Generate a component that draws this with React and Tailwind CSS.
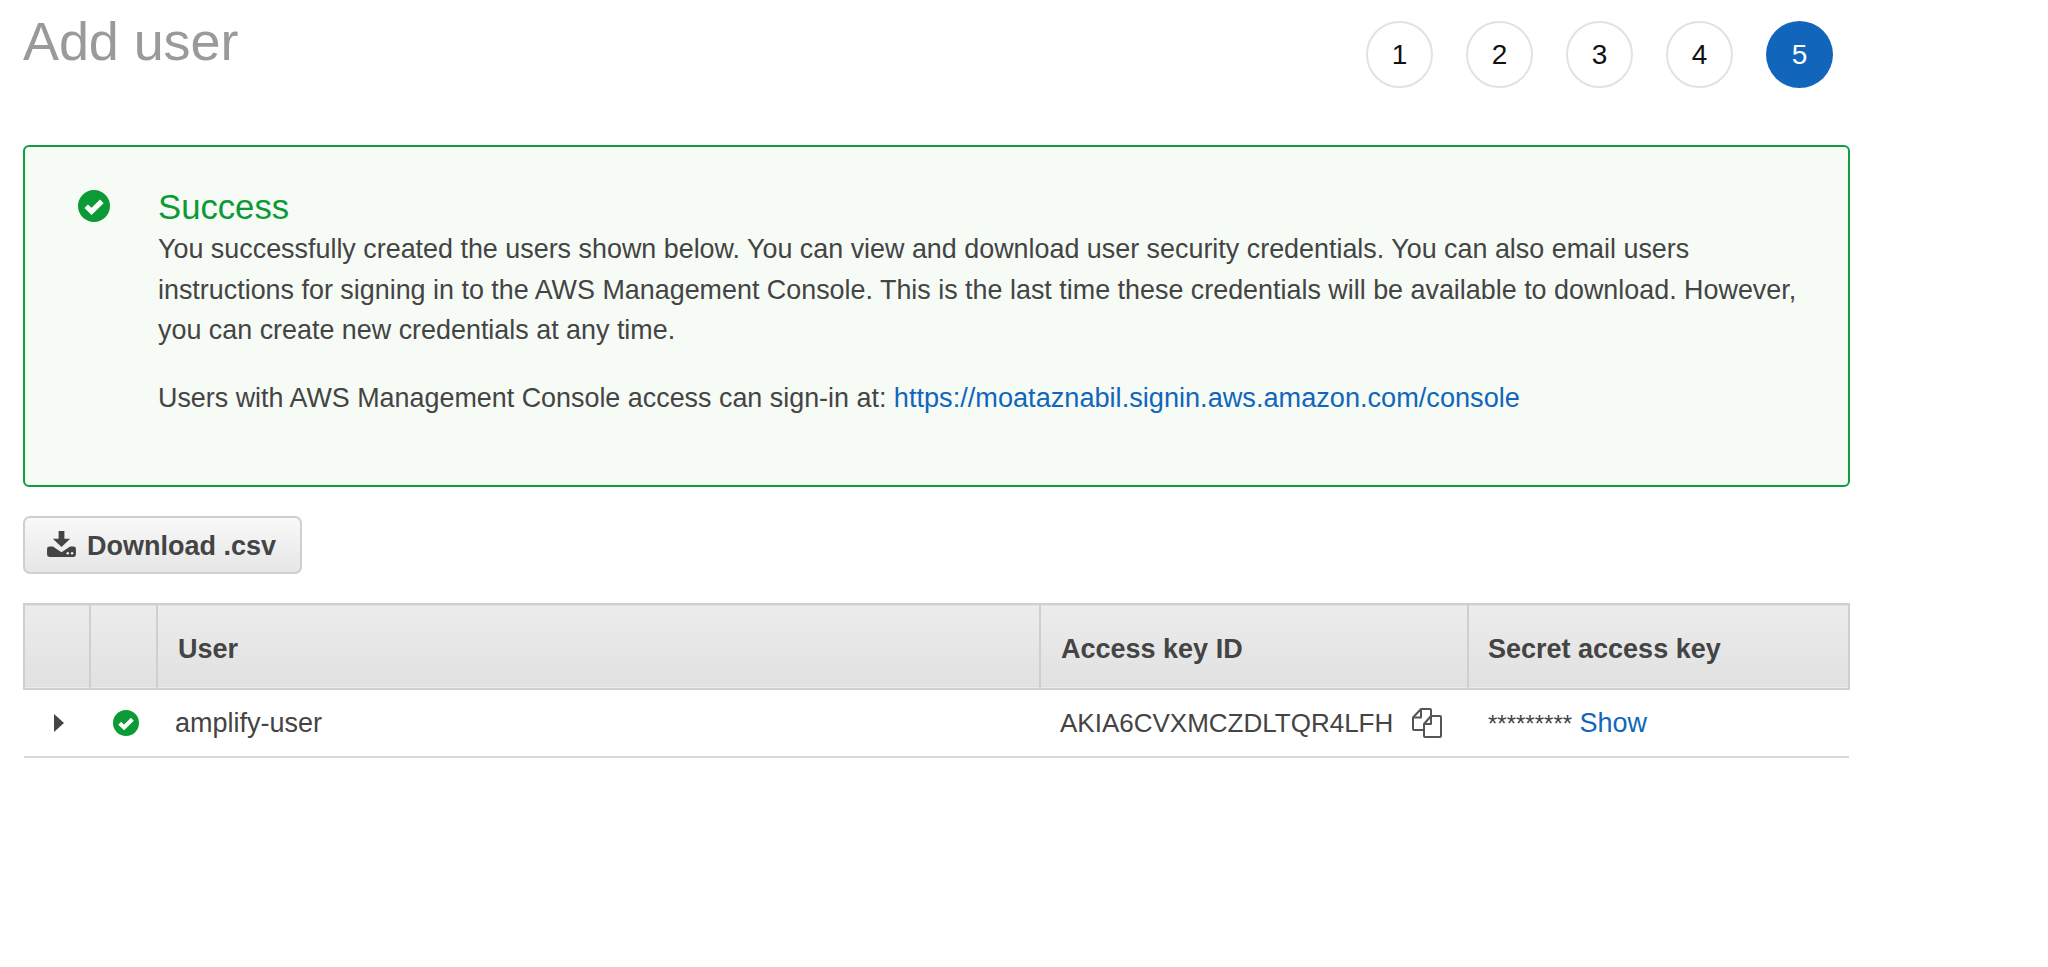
const CheckCircle = ({ className }) => (
  <svg viewBox="0 0 32 32" className={className}>
    <circle cx="16" cy="16" r="16" fill="#0b9a36" />
    <path d="M8.200 16.200l5.400 5.200 10.200-10" fill="none" stroke="#fff" strokeWidth="5" />
  </svg>
);

const DownloadIcon = () => (
  <svg viewBox="0 0 30 27" className="w-[29px] h-[26px] mb-[5px]">
    <path d="M12 0h6v8h6L15 16.500 6 8h6z" fill="#444" />
    <path d="M2.500 16H6l9 6 9-6h3.500a2.500 2.500 0 0 1 2.500 2.500v6a2.500 2.500 0 0 1-2.500 2.500h-25A2.500 2.500 0 0 1 0 24.500v-6A2.500 2.500 0 0 1 2.500 16z" fill="#444" />
    <circle cx="21.500" cy="23" r="1.300" fill="#eee" />
    <circle cx="26" cy="23" r="1.300" fill="#eee" />
  </svg>
);

const CopyIcon = () => (
  <svg viewBox="0 0 30 30" className="w-[30px] h-[30px]" fill="none" stroke="#555" strokeWidth="2" strokeLinejoin="round">
    <path d="M12 22H2a1 1 0 0 1-1-1V9.500L9 1h9a1 1 0 0 1 1 1v6" />
    <path d="M9 1v8.500H1" />
    <path d="M12 28V16l7-8h9a1 1 0 0 1 1 1v19a1 1 0 0 1-1 1H13a1 1 0 0 1-1-1z" />
    <path d="M19 8v8h-7" />
  </svg>
);

const steps = [1, 2, 3, 4, 5];

export default function App() {
  return (
    <div className="min-h-[967px] bg-white pl-[23px] font-['Liberation_Sans',Arial,sans-serif] text-[#444]">
      <div className="w-[1827px]">
        {/* Header */}
        <div className="flex justify-between h-[145px]">
          <h1 className="text-[54px] leading-[62px] pt-[10px] text-[#9a9a9a] tracking-[-0.1px]">Add user</h1>
          <div className="flex gap-[33px] pt-[21px] pr-[17px] items-start">
            {steps.map((s) => (
              <div
                key={s}
                className={
                  s === 5
                    ? "w-[67px] h-[67px] rounded-full bg-[#1166bb] text-white flex items-center justify-center text-[28px]"
                    : "w-[67px] h-[67px] rounded-full border-2 border-[#e2e2e2] text-[#111] flex items-center justify-center text-[28px]"
                }
              >
                {s}
              </div>
            ))}
          </div>
        </div>

        {/* Success alert */}
        <div className="flex h-[342px] border-2 border-[#0f9d3f] rounded-[6px] bg-[#f6fbf6] pt-[42px] pl-[53px]">
          <CheckCircle className="w-[32px] h-[32px] mt-[1px] shrink-0" />
          <div className="ml-[48px] w-[1650px]">
            <h2 className="text-[34.700px] leading-[36px] text-[#0b9a36]">Success</h2>
            <p className="text-[26.900px] leading-[40.500px] mt-[4px]">
              You successfully created the users shown below. You can view and download user security credentials. You can also email users instructions for signing in to the AWS Management Console. This is the last time these credentials will be available to download. However, you can create new credentials at any time.
            </p>
            <p className="text-[26.900px] leading-[40px] mt-[27px]">
              Users with AWS Management Console access can sign-in at:{" "}
              <a className="text-[27.150px] text-[#1166bb]">https://moataznabil.signin.aws.amazon.com/console</a>
            </p>
          </div>
        </div>

        {/* Download button */}
        <button className="flex items-center mt-[29px] w-[279px] h-[58px] pl-[22px] pt-[2px] gap-[11px] border-2 border-[#cfcfcf] rounded-[7px] bg-gradient-to-b from-[#f9f9f9] to-[#e6e6e6] text-[27px] font-bold text-[#444]">
          <DownloadIcon />
          Download .csv
        </button>

        {/* Users table */}
        <table className="mt-[29px] w-full table-fixed border-collapse text-[27px]">
          <thead>
            <tr className="h-[85px] bg-gradient-to-b from-[#ececec] to-[#e1e1e1] border-2 border-[#cfcfcf]">
              <th className="w-[66px] border-r-2 border-[#cfcfcf]"></th>
              <th className="w-[67px] border-r-2 border-[#cfcfcf]"></th>
              <th className="w-[883px] border-r-2 border-[#cfcfcf] text-left pl-[20px] pt-[5px]">User</th>
              <th className="w-[428px] border-r-2 border-[#cfcfcf] text-left pl-[20px] pt-[5px]">Access key ID</th>
              <th className="text-left pl-[19px] pt-[5px]">Secret access key</th>
            </tr>
          </thead>
          <tbody>
            <tr className="h-[68px] border-b-2 border-[#d8d8d8]">
              <td>
                <div className="ml-[30px] w-0 h-0 border-y-[9px] border-y-transparent border-l-[10px] border-l-[#444]" />
              </td>
              <td>
                <CheckCircle className="w-[26px] h-[26px] ml-[23px]" />
              </td>
              <td className="pl-[18px]">amplify-user</td>
              <td className="pl-[20px]">
                <div className="flex items-center gap-[19px]">
                  <span className="text-[26px]">AKIA6CVXMCZDLTQR4LFH</span>
                  <CopyIcon />
                </div>
              </td>
              <td className="pl-[20px]">
                <span className="text-[24px]">*********</span>{" "}
                <a className="text-[#1166bb]">Show</a>
              </td>
            </tr>
          </tbody>
        </table>
      </div>
    </div>
  );
}
